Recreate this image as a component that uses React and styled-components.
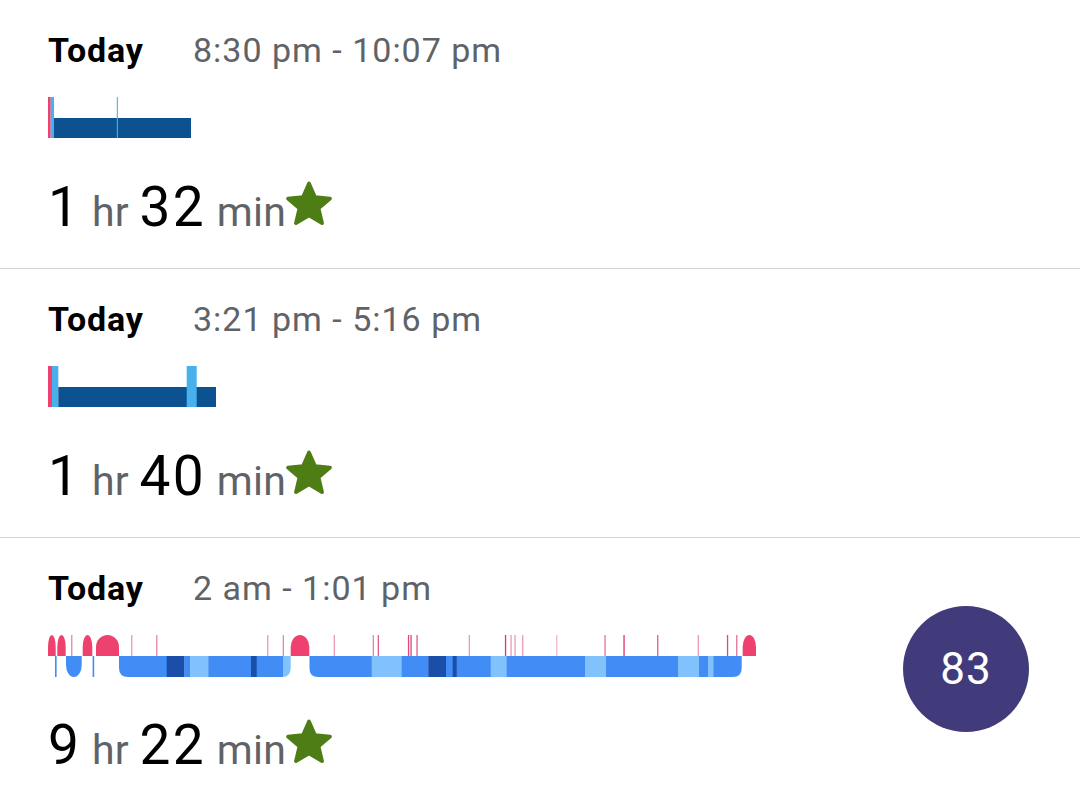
import React from "react";
import styled, { createGlobalStyle } from "styled-components";

const GlobalStyle = createGlobalStyle`
  html, body {
    margin: 0;
    padding: 0;
    background: #ffffff;
  }
  body {
    font-family: Roboto, "Noto Sans", sans-serif;
    -webkit-font-smoothing: antialiased;
  }
`;

const List = styled.div`
  width: 1080px;
  height: 802px;
  overflow: hidden;
  display: flex;
  flex-direction: column;
`;

const Row = styled.div`
  height: 268px;
  flex-shrink: 0;
  border-bottom: 1px solid #d4d4d4;
  display: flex;
  align-items: center;
  padding: 0 51px 0 48px;
  box-sizing: content-box;

  &:last-child {
    border-bottom: none;
  }
`;

const Body = styled.div`
  flex: 1;
  align-self: stretch;
  display: flex;
  flex-direction: column;
  padding-top: 30px;
`;

const Header = styled.div`
  display: flex;
  align-items: baseline;
  height: 40px;
  line-height: 40px;
  font-size: 34px;
  letter-spacing: 1px;
`;

const Day = styled.span`
  font-weight: 700;
  color: #000000;
  width: 145px;
  letter-spacing: 0.8px;
`;

const Range = styled.span`
  color: #5f6368;
`;

const Chart = styled.svg`
  display: block;
  margin-top: 25px;
  width: 780px;
  height: 44px;
  margin-left: -48px;
`;

const Duration = styled.div`
  margin-top: 38px;
  height: 60px;
  line-height: 60px;
  display: flex;
  align-items: baseline;
  white-space: pre;
`;

const Num = styled.span`
  font-size: 55px;
  letter-spacing: 2.5px;
  color: #000000;
`;

const Unit = styled.span`
  font-size: 41px;
  letter-spacing: 0.3px;
  color: #5f6368;
`;

const Star = styled.svg`
  width: 56px;
  height: 56px;
  align-self: flex-end;
  margin-left: -5px;
  margin-bottom: 5px;
`;

const Score = styled.div`
  width: 126px;
  height: 126px;
  border-radius: 50%;
  background: #413b7c;
  color: #ffffff;
  font-size: 44px;
  letter-spacing: 1px;
  display: flex;
  align-items: center;
  justify-content: center;
  margin-bottom: 6px;
  flex-shrink: 0;
`;

const PINK = "#ef416f";
const NAP_DARK = "#0c5291";
const NAP_LIGHT = "#48b0ec";
const DEEP = "#1a4ea8";
const MID = "#428cf6";
const LITE = "#82c2fc";

const StarIcon = () => (
  <Star viewBox="0 0 24 24">
    <path
      d="M12 3.2l2.6 5.9 6.4.6-4.9 4.2 1.5 6.3L12 16.9l-5.6 3.3 1.5-6.3L3 9.7l6.4-.6z"
      fill="#4e7d15"
      stroke="#4e7d15"
      strokeWidth="1.6"
      strokeLinejoin="round"
    />
  </Star>
);

const NapChart = ({ bars }) => (
  <Chart viewBox="0 0 780 44">
    {bars.map(([x0, x1, color, low], i) => (
      <rect
        key={i}
        x={x0}
        width={x1 - x0}
        y={low ? 23 : 2}
        height={low ? 20 : 41}
        fill={color}
      />
    ))}
  </Chart>
);

// main sleep: awake humps on top, stage blocks below
const humps = [
  [48, 55.7], [57.3, 65.7], [82.7, 92.3], [96, 119], [290.7, 309.3], [742.7, 756],
];
const ticks = [
  [71.7, 0.6], [131.7, 0.5], [156.7, 0.6], [267.7, 0.5], [283.3, 0.6], [334.3, 0.5],
  [373.3, 0.6], [378.3, 0.8], [408.5, 0.9], [411, 0.9], [417, 0.8], [469.3, 0.5],
  [505.5, 1], [511, 0.5], [515, 0.5], [522.7, 0.5], [556.7, 0.35], [605, 0.7],
  [624, 1], [657.7, 0.8], [698.3, 0.5], [727.5, 0.9], [736.7, 0.7],
];
const blocks = [
  {
    x0: 119,
    x1: 290.7,
    parts: [
      [119, 166.7, MID], [166.7, 184.3, DEEP], [184.3, 190, MID], [190, 208.3, LITE],
      [208.3, 251, MID], [251, 256.7, DEEP], [256.7, 283, MID], [283, 290.7, LITE],
    ],
  },
  {
    x0: 309.3,
    x1: 741.7,
    parts: [
      [309.3, 371.7, MID], [371.7, 401.7, LITE], [401.7, 428.3, MID], [428.3, 446, DEEP],
      [446, 452.7, MID], [452.7, 456.7, DEEP], [456.7, 490.7, MID], [490.7, 506.7, LITE],
      [506.7, 585, MID], [585, 606, LITE], [606, 678.3, MID], [678.3, 699, LITE],
      [699, 708.3, MID], [708.3, 713.3, LITE], [713.3, 741.7, MID],
    ],
  },
];

const humpPath = (x0, x1, top, base) => {
  const rx = (x1 - x0) / 2;
  const ry = Math.min(12, base - top);
  return `M${x0} ${base} L${x0} ${top + ry} A${rx} ${ry} 0 0 1 ${x1} ${top + ry} L${x1} ${base} Z`;
};

const dipPath = (x0, x1, top, base) => {
  const rx = (x1 - x0) / 2;
  const ry = Math.min(12, base - top);
  return `M${x0} ${top} L${x0} ${base - ry} A${rx} ${ry} 0 0 0 ${x1} ${base - ry} L${x1} ${top} Z`;
};

const blockPath = (x0, x1, top, base, r) =>
  `M${x0} ${top} L${x1} ${top} L${x1} ${base - r} Q${x1} ${base} ${x1 - r} ${base} L${x0 + r} ${base} Q${x0} ${base} ${x0} ${base - r} Z`;

const SleepChart = () => (
  <Chart viewBox="0 0 780 44">
    <defs>
      {blocks.map((b, i) => (
        <clipPath id={`blk${i}`} key={i}>
          <path d={blockPath(b.x0, b.x1, 23, 44, 9)} />
        </clipPath>
      ))}
    </defs>
    {ticks.map(([x, o], i) => (
      <rect key={i} x={x - 0.6} width="1.3" y="2" height="21" fill="#d9356a" opacity={o} />
    ))}
    {humps.map(([a, b], i) => (
      <path key={i} d={humpPath(a, b, 2, 23)} fill={PINK} />
    ))}
    <rect x="55" width="1.6" y="23" height="21" fill={MID} />
    <rect x="92.6" width="1.6" y="23" height="21" fill={MID} />
    <path d={dipPath(66, 81.7, 23, 44)} fill={MID} />
    {blocks.map((b, i) => (
      <g key={i} clipPath={`url(#blk${i})`}>
        {b.parts.map(([x0, x1, c], j) => (
          <rect key={j} x={x0} width={x1 - x0 + 0.3} y="23" height="21" fill={c} />
        ))}
      </g>
    ))}
  </Chart>
);

const DurationLine = ({ hours, minutes }) => (
  <Duration>
    <Num>{hours}</Num>
    <Unit> hr </Unit>
    <Num>{minutes}</Num>
    <Unit> min</Unit>
    <StarIcon />
  </Duration>
);

const naps = [
  {
    range: "8:30 pm - 10:07 pm",
    hours: 1,
    minutes: 32,
    bars: [
      [48, 50.7, PINK],
      [50.7, 54, NAP_LIGHT],
      [54, 191, NAP_DARK, true],
      [116.8, 117.9, NAP_LIGHT],
    ],
  },
  {
    range: "3:21 pm - 5:16 pm",
    hours: 1,
    minutes: 40,
    bars: [
      [48, 52, PINK],
      [52, 58.3, NAP_LIGHT],
      [58.3, 216, NAP_DARK, true],
      [186.7, 196.7, NAP_LIGHT],
    ],
  },
];

export default function App() {
  return (
    <>
      <GlobalStyle />
      <List>
        {naps.map((n) => (
          <Row key={n.range}>
            <Body>
              <Header>
                <Day>Today</Day>
                <Range>{n.range}</Range>
              </Header>
              <NapChart bars={n.bars} />
              <DurationLine hours={n.hours} minutes={n.minutes} />
            </Body>
          </Row>
        ))}
        <Row>
          <Body>
            <Header>
              <Day>Today</Day>
              <Range>2 am - 1:01 pm</Range>
            </Header>
            <SleepChart />
            <DurationLine hours={9} minutes={22} />
          </Body>
          <Score>83</Score>
        </Row>
      </List>
    </>
  );
}
